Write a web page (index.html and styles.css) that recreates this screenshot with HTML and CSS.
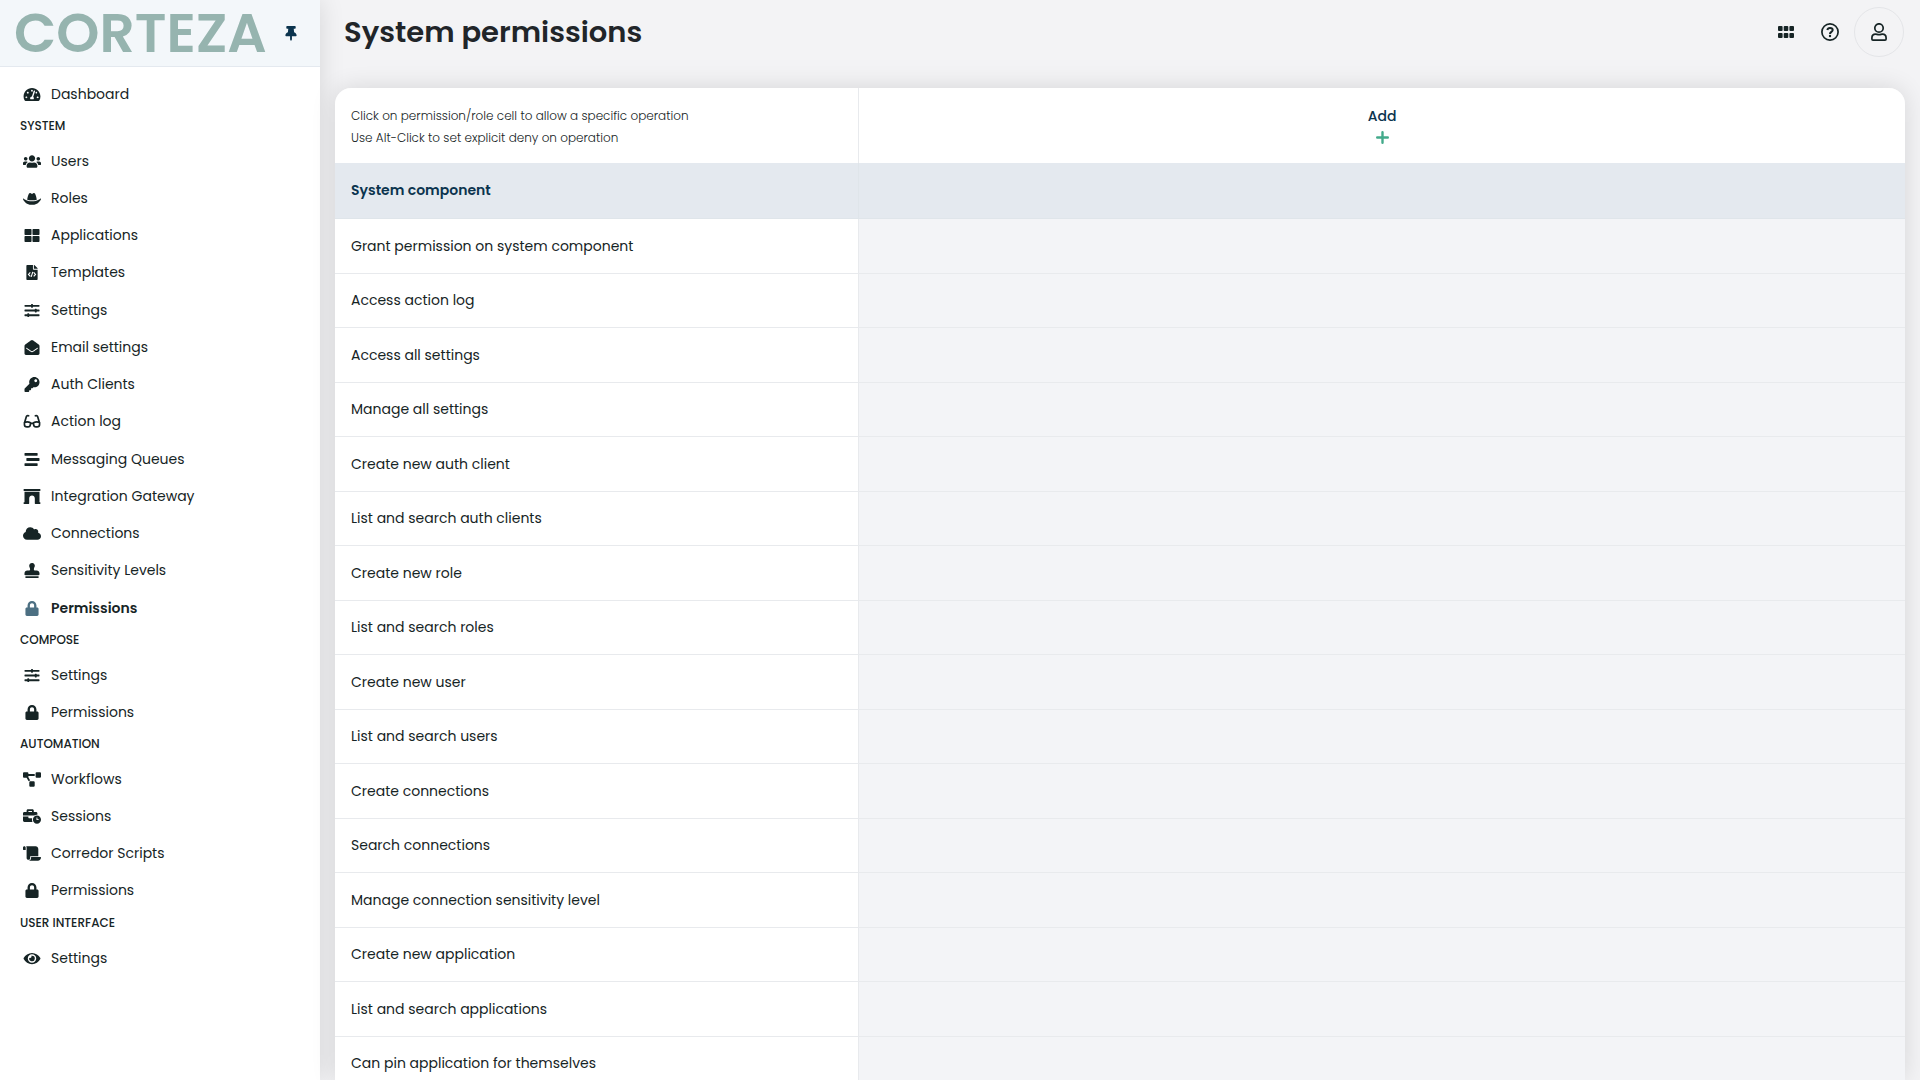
FILE: index.html
```html
<!DOCTYPE html>
<html lang="en">
<head>
<meta charset="utf-8">
<title>System permissions</title>
<meta name="viewport" content="width=device-width, initial-scale=1">
<link rel="stylesheet" href="styles.css">
</head>
<body>
<svg class="sprite" aria-hidden="true">
  <symbol id="gauge" viewBox="0 0 576 512"><path d="M288 32C128.94 32 0 160.94 0 320c0 52.8 14.25 102.26 39.06 144.8 5.61 9.62 16.3 15.2 27.44 15.2h443c11.14 0 21.83-5.58 27.44-15.2C561.75 422.26 576 372.8 576 320c0-159.06-128.94-288-288-288zm0 64c14.71 0 26.58 10.13 30.32 23.65-1.11 2.26-2.64 4.23-3.45 6.67l-9.22 27.67c-5.13 3.49-10.97 6.01-17.64 6.01-17.67 0-32-14.33-32-32S270.33 96 288 96zM96 384c-17.67 0-32-14.33-32-32s14.33-32 32-32 32 14.33 32 32-14.33 32-32 32zm48-160c-17.67 0-32-14.33-32-32s14.33-32 32-32 32 14.33 32 32-14.33 32-32 32zm246.77-72.41l-61.33 184C343.13 347.33 352 364.54 352 384c0 11.72-3.38 22.55-8.88 32H232.88c-5.5-9.45-8.88-20.28-8.88-32 0-33.94 26.5-61.43 59.9-63.59l61.34-184.01c4.17-12.56 17.73-19.45 30.36-15.17 12.57 4.19 19.35 17.79 15.17 30.36zm14.66 57.2l15.52-46.55c3.47-1.29 7.13-2.23 11.05-2.23 17.67 0 32 14.33 32 32s-14.33 32-32 32c-11.38-.01-20.89-6.28-26.57-15.22zM480 384c-17.67 0-32-14.33-32-32s14.33-32 32-32 32 14.33 32 32-14.33 32-32 32z"/></symbol>
  <symbol id="users" viewBox="0 0 640 512"><path d="M96 224c35.3 0 64-28.7 64-64s-28.7-64-64-64-64 28.7-64 64 28.7 64 64 64zm448 0c35.3 0 64-28.7 64-64s-28.7-64-64-64-64 28.7-64 64 28.7 64 64 64zm32 32h-64c-17.6 0-33.5 7.1-45.1 18.6 40.3 22.1 68.9 62 75.1 109.4h66c17.7 0 32-14.3 32-32v-32c0-35.3-28.7-64-64-64zm-256 0c61.9 0 112-50.1 112-112S381.9 32 320 32 208 82.1 208 144s50.1 112 112 112zm76.8 32h-8.3c-20.8 10-43.9 16-68.5 16s-47.6-6-68.5-16h-8.3C179.6 288 128 339.6 128 403.2V432c0 26.5 21.5 48 48 48h288c26.5 0 48-21.5 48-48v-28.8c0-63.6-51.6-115.2-115.2-115.2zm-223.7-13.4C161.5 263.1 145.6 256 128 256H64c-35.3 0-64 28.7-64 64v32c0 17.7 14.3 32 32 32h65.9c6.3-47.4 34.9-87.3 75.2-109.4z"/></symbol>
  <symbol id="hat" viewBox="0 0 640 512"><path d="M490 296.9C480.51 239.51 450.51 64 392.3 64c-14 0-26.49 5.93-37 14a58.21 58.21 0 0 1-70.58 0c-10.51-8-23-14-37-14-58.2 0-88.2 175.47-97.71 232.88C188.81 309.47 243.73 320 320 320s131.23-10.51 170-23.1zm142.9-37.18a16 16 0 0 0-19.75 1.5c-1 .9-101.27 90.78-293.16 90.78-190.82 0-292.22-89.94-293.24-90.84A16 16 0 0 0 1 278.53C1.73 280.55 78.32 480 320 480s318.27-199.45 319-201.47a16 16 0 0 0-6.09-18.81z"/></symbol>
  <symbol id="tiles" viewBox="0 0 512 512"><path d="M296 32h192c13.255 0 24 10.745 24 24v160c0 13.255-10.745 24-24 24H296c-13.255 0-24-10.745-24-24V56c0-13.255 10.745-24 24-24zm-80 0H24C10.745 32 0 42.745 0 56v160c0 13.255 10.745 24 24 24h192c13.255 0 24-10.745 24-24V56c0-13.255-10.745-24-24-24zM0 296v160c0 13.255 10.745 24 24 24h192c13.255 0 24-10.745 24-24V296c0-13.255-10.745-24-24-24H24c-13.255 0-24 10.745-24 24zm296 184h192c13.255 0 24-10.745 24-24V296c0-13.255-10.745-24-24-24H296c-13.255 0-24 10.745-24 24v160c0 13.255 10.745 24 24 24z"/></symbol>
  <symbol id="filecode" viewBox="0 0 384 512"><path d="M384 121.941V128H256V0h6.059c6.365 0 12.47 2.529 16.971 7.029l97.941 97.941A24.005 24.005 0 0 1 384 121.941zM248 160c-13.2 0-24-10.8-24-24V0H24C10.745 0 0 10.745 0 24v464c0 13.255 10.745 24 24 24h336c13.255 0 24-10.745 24-24V160H248z"/><path fill="none" stroke="#fff" stroke-width="38" d="M134 254l-62 66 62 66M250 254l62 66-62 66M220 232l-56 176"/></symbol>
  <symbol id="sliders" viewBox="0 0 512 512"><path d="M496 384H160v-16c0-8.800-7.200-16-16-16h-32c-8.800 0-16 7.200-16 16v16H16c-8.800 0-16 7.200-16 16v32c0 8.800 7.200 16 16 16h80v16c0 8.800 7.200 16 16 16h32c8.800 0 16-7.200 16-16v-16h336c8.800 0 16-7.200 16-16v-32c0-8.800-7.200-16-16-16zm0-160h-80v-16c0-8.800-7.200-16-16-16h-32c-8.800 0-16 7.200-16 16v16H16c-8.800 0-16 7.200-16 16v32c0 8.800 7.200 16 16 16h336v16c0 8.800 7.200 16 16 16h32c8.800 0 16-7.200 16-16v-16h80c8.800 0 16-7.200 16-16v-32c0-8.800-7.200-16-16-16zm0-160H288V48c0-8.800-7.200-16-16-16h-32c-8.800 0-16 7.200-16 16v16H16C7.200 64 0 71.200 0 80v32c0 8.800 7.200 16 16 16h208v16c0 8.800 7.200 16 16 16h32c8.800 0 16-7.200 16-16v-16h208c8.800 0 16-7.200 16-16V80c0-8.800-7.200-16-16-16z"/></symbol>
  <symbol id="mail" viewBox="0 0 512 512"><path d="M512 464c0 26.51-21.49 48-48 48H48c-26.51 0-48-21.49-48-48V200.724a48 48 0 0 1 18.387-37.776c24.913-19.529 45.501-35.365 164.2-121.511C199.412 29.17 232.797-.347 256 .003c23.198-.354 56.596 29.172 73.413 41.433 118.687 86.137 139.303 101.995 164.2 121.512A48 48 0 0 1 512 200.724V464zm-65.666-196.605c-2.563-3.728-7.7-4.595-11.339-1.907-22.845 16.873-55.462 40.705-105.582 77.079-16.825 12.266-50.21 41.781-73.413 41.43-23.211.344-56.559-29.143-73.413-41.43-50.114-36.37-82.734-60.204-105.582-77.079-3.639-2.688-8.776-1.821-11.339 1.907l-9.072 13.196a7.998 7.998 0 0 0 1.839 10.967c22.887 16.899 55.454 40.69 105.303 76.868 20.274 14.781 56.524 47.813 92.264 47.573 35.724.242 71.961-32.771 92.263-47.573 49.85-36.179 82.418-59.97 105.303-76.868a7.998 7.998 0 0 0 1.839-10.967l-9.071-13.196z"/></symbol>
  <symbol id="key" viewBox="0 0 512 512"><path d="M512 176.001C512 273.203 433.202 352 336 352c-11.22 0-22.19-1.062-32.827-3.069l-24.012 27.014A23.999 23.999 0 0 1 261.223 384H224v40c0 13.255-10.745 24-24 24h-40v40c0 13.255-10.745 24-24 24H24c-13.255 0-24-10.745-24-24v-78.059c0-6.365 2.529-12.47 7.029-16.971l161.802-161.802C163.108 213.814 160 195.271 160 176 160 78.798 238.797.001 335.999 0 433.488-.001 512 78.511 512 176.001zM336 128c0 26.51 21.49 48 48 48s48-21.49 48-48-21.49-48-48-48-48 21.49-48 48z"/></symbol>
  <symbol id="glasses" viewBox="0 0 576 512"><path fill="none" stroke="currentColor" stroke-width="58" stroke-linecap="round" stroke-linejoin="round" d="M174 62c-42-16-68-8-80 34L30 310M402 62c42-16 68-8 80 34l64 214M30 290c62-28 136-28 208 8l-6 66c-4 48-32 78-78 78h-38c-52 0-86-36-86-84zM546 290c-62-28-136-28-208 8l6 66c4 48 32 78 78 78h38c52 0 86-36 86-84zM238 318h100"/></symbol>
  <symbol id="stream" viewBox="0 0 512 512"><path d="M16 128h416c8.840 0 16-7.160 16-16V48c0-8.840-7.160-16-16-16H16C7.160 32 0 39.160 0 48v64c0 8.840 7.160 16 16 16zm480 80H80c-8.840 0-16 7.160-16 16v64c0 8.840 7.160 16 16 16h416c8.840 0 16-7.160 16-16v-64c0-8.840-7.160-16-16-16zm-64 176H16c-8.840 0-16 7.160-16 16v64c0 8.840 7.160 16 16 16h416c8.840 0 16-7.160 16-16v-64c0-8.840-7.160-16-16-16z"/></symbol>
  <symbol id="archway" viewBox="0 0 576 512"><path d="M560 448h-16V96H32v352H16.020c-8.840 0-16 7.160-16 16v32c0 8.840 7.160 16 16 16H176c8.840 0 16-7.160 16-16V320c0-53.020 42.980-96 96-96s96 42.980 96 96l.02 160v16c0 8.840 7.160 16 16 16H560c8.840 0 16-7.160 16-16v-32c0-8.840-7.160-16-16-16zm0-448H16C7.160 0 0 7.160 0 16v32c0 8.840 7.160 16 16 16h544c8.840 0 16-7.160 16-16V16c0-8.840-7.160-16-16-16z"/></symbol>
  <symbol id="cloud" viewBox="0 0 640 512"><path d="M537.6 226.6c4.1-10.7 6.4-22.4 6.4-34.6 0-53-43-96-96-96-19.7 0-38.1 6-53.3 16.2C367 64.2 315.3 32 256 32c-88.4 0-160 71.6-160 160 0 2.7.1 5.4.2 8.1C40.2 219.8 0 273.2 0 336c0 79.5 64.5 144 144 144h368c70.7 0 128-57.3 128-128 0-61.9-44-113.6-102.4-125.4z"/></symbol>
  <symbol id="stamp" viewBox="0 0 512 512"><path d="M32 512h448v-64H32v64zm384-256h-66.560c-16.260 0-29.440-13.180-29.440-29.440v-9.460c0-27.370 8.880-53.410 21.460-77.720 9.110-17.610 12.900-38.390 9.050-60.420-6.770-38.780-38.470-70.700-77.260-77.450C212.620-9.040 160 37.330 160 96c0 14.160 3.120 27.540 8.690 39.580C182.020 164.430 192 194.700 192 226.490v.07c0 16.260-13.180 29.440-29.440 29.440H96c-53.020 0-96 42.980-96 96v32c0 17.670 14.330 32 32 32h448c17.670 0 32-14.330 32-32v-32c0-53.020-42.980-96-96-96z"/></symbol>
  <symbol id="lock" viewBox="0 0 448 512"><path d="M400 224h-24v-72C376 68.200 307.800 0 224 0S72 68.200 72 152v72H48c-26.500 0-48 21.500-48 48v192c0 26.500 21.500 48 48 48h352c26.500 0 48-21.500 48-48V272c0-26.500-21.500-48-48-48zm-104 0H152v-72c0-39.700 32.300-72 72-72s72 32.300 72 72v72z"/></symbol>
  <symbol id="diagram" viewBox="0 0 640 512"><path d="M384 320H256c-17.670 0-32 14.330-32 32v128c0 17.670 14.330 32 32 32h128c17.670 0 32-14.330 32-32V352c0-17.670-14.330-32-32-32zM192 32c0-17.670-14.330-32-32-32H32C14.330 0 0 14.330 0 32v128c0 17.670 14.330 32 32 32h95.720l73.160 128.040C211.980 300.980 232.400 288 256 288h.28L192 175.510V128h224V64H192V32zM608 0H480c-17.670 0-32 14.330-32 32v128c0 17.670 14.330 32 32 32h128c17.670 0 32-14.330 32-32V32c0-17.670-14.330-32-32-32z"/></symbol>
  <symbol id="worktime" viewBox="0 0 640 512"><path d="M496 224c-79.590 0-144 64.410-144 144s64.410 144 144 144 144-64.410 144-144-64.410-144-144-144zm64 150.290c0 5.340-4.370 9.710-9.710 9.710h-60.570c-5.340 0-9.710-4.370-9.710-9.710v-76.570c0-5.340 4.370-9.710 9.710-9.710h12.570c5.340 0 9.710 4.370 9.710 9.710V352h38.290c5.340 0 9.710 4.370 9.710 9.710v12.580zM496 192c5.400 0 10.720.33 16 .81V144c0-25.600-22.400-48-48-48h-80V48c0-25.600-22.400-48-48-48H176c-25.600 0-48 22.400-48 48v48H48c-25.600 0-48 22.400-48 48v80h395.120c28.600-20.090 63.350-32 100.880-32zM320 96H192V64h128v32zm6.820 224H208c-8.840 0-16-7.160-16-16v-48H0v144c0 25.600 22.400 48 48 48h291.430C327.100 423.960 320 396.820 320 368c0-16.660 2.480-32.720 6.820-48z"/></symbol>
  <symbol id="scroll" viewBox="0 0 640 512"><path d="M48 0C21.530 0 0 21.530 0 48v64c0 8.840 7.160 16 16 16h80V48C96 21.530 74.470 0 48 0zm208 412.570V352h288V96c0-52.940-43.060-96-96-96H111.590C121.740 13.410 128 29.920 128 48v368c0 38.870 34.650 69.650 74.750 63.120C234.220 474 256 444.460 256 412.570zM288 384v32c0 52.930-43.060 96-96 96h336c61.860 0 112-50.140 112-112 0-8.840-7.160-16-16-16H288z"/></symbol>
  <symbol id="eye" viewBox="0 0 576 512"><path d="M572.52 241.4C518.29 135.59 410.93 64 288 64S57.68 135.64 3.48 241.41a32.35 32.35 0 0 0 0 29.19C57.71 376.41 165.07 448 288 448s230.32-71.64 284.52-177.41a32.35 32.35 0 0 0 0-29.19zM288 400a144 144 0 1 1 144-144 143.93 143.93 0 0 1-144 144zm0-240a95.31 95.31 0 0 0-25.31 3.79 47.85 47.85 0 0 1-66.9 66.9A95.78 95.78 0 1 0 288 160z"/></symbol>
  <symbol id="pin" viewBox="0 0 384 512"><path d="M298.028 214.267L285.793 96H328c13.255 0 24-10.745 24-24V24c0-13.255-10.745-24-24-24H56C42.745 0 32 10.745 32 24v48c0 13.255 10.745 24 24 24h42.207L85.972 214.267C37.465 236.82 0 277.261 0 328c0 13.255 10.745 24 24 24h136v104.007c0 1.242.289 2.467.845 3.578l24 48c2.941 5.882 11.364 5.893 14.311 0l24-48a8.008 8.008 0 0 0 .845-3.578V352h136c13.255 0 24-10.745 24-24-.001-51.183-37.983-91.42-85.973-113.733z"/></symbol>
</svg>

<div class="app">
  <aside class="sidebar">
    <header class="brand">
      <a class="logo" href="#">CORTEZA</a>
      <button class="pin" type="button" aria-label="Unpin sidebar"><svg><use href="#pin"/></svg></button>
    </header>
    <nav class="nav">
      <ul>
        <li><a href="#"><svg><use href="#gauge"/></svg>Dashboard</a></li>
      </ul>
      <h2>SYSTEM</h2>
      <ul>
        <li><a href="#"><svg><use href="#users"/></svg>Users</a></li>
        <li><a href="#"><svg><use href="#hat"/></svg>Roles</a></li>
        <li><a href="#"><svg><use href="#tiles"/></svg>Applications</a></li>
        <li><a href="#"><svg><use href="#filecode"/></svg>Templates</a></li>
        <li><a href="#"><svg><use href="#sliders"/></svg>Settings</a></li>
        <li><a href="#"><svg><use href="#mail"/></svg>Email settings</a></li>
        <li><a href="#"><svg><use href="#key"/></svg>Auth Clients</a></li>
        <li><a href="#"><svg><use href="#glasses"/></svg>Action log</a></li>
        <li><a href="#"><svg><use href="#stream"/></svg>Messaging Queues</a></li>
        <li><a href="#"><svg><use href="#archway"/></svg>Integration Gateway</a></li>
        <li><a href="#"><svg><use href="#cloud"/></svg>Connections</a></li>
        <li><a href="#"><svg><use href="#stamp"/></svg>Sensitivity Levels</a></li>
        <li><a class="active" href="#" aria-current="page"><svg><use href="#lock"/></svg>Permissions</a></li>
      </ul>
      <h2>COMPOSE</h2>
      <ul>
        <li><a href="#"><svg><use href="#sliders"/></svg>Settings</a></li>
        <li><a href="#"><svg><use href="#lock"/></svg>Permissions</a></li>
      </ul>
      <h2>AUTOMATION</h2>
      <ul>
        <li><a href="#"><svg><use href="#diagram"/></svg>Workflows</a></li>
        <li><a href="#"><svg><use href="#worktime"/></svg>Sessions</a></li>
        <li><a href="#"><svg><use href="#scroll"/></svg>Corredor Scripts</a></li>
        <li><a href="#"><svg><use href="#lock"/></svg>Permissions</a></li>
      </ul>
      <h2>USER INTERFACE</h2>
      <ul>
        <li><a href="#"><svg><use href="#eye"/></svg>Settings</a></li>
      </ul>
    </nav>
  </aside>

  <main class="main">
    <header class="topbar">
      <h1>System permissions</h1>
      <div class="tools">
        <button class="tool" type="button" aria-label="Applications">
          <svg width="16" height="12" viewBox="0 0 16 12"><rect width="4.600" height="5" rx="1"/><rect x="5.700" width="4.600" height="5" rx="1"/><rect x="11.400" width="4.600" height="5" rx="1"/><rect y="7" width="4.600" height="5" rx="1"/><rect x="5.700" y="7" width="4.600" height="5" rx="1"/><rect x="11.400" y="7" width="4.600" height="5" rx="1"/></svg>
        </button>
        <button class="tool" type="button" aria-label="Help">
          <svg class="outline" width="18" height="18" viewBox="0 0 18 18" stroke-width="1.700"><circle cx="9" cy="9" r="8.100"/><path stroke-width="2" d="M6.300 7C6.600 5.500 7.700 4.900 9 4.900c1.500 0 2.700.9 2.700 2.200C11.700 8.900 9 8.900 9 10.900"/><circle cx="9" cy="13" r="1.200" fill="currentColor" stroke="none"/></svg>
        </button>
        <button class="tool avatar" type="button" aria-label="Account">
          <svg class="outline" width="16" height="18" viewBox="0 0 16 18" stroke-width="1.700"><circle cx="8" cy="5" r="4.200"/><path stroke-linejoin="round" d="M4.600 11.200c1.200 0 1.700.5 3.400.5s2.200-.5 3.400-.5c2.200 0 3.700 1.600 3.700 3.800v1c0 .7-.4 1.100-1.100 1.100H2c-.7 0-1.100-.4-1.100-1.100v-1c0-2.200 1.500-3.800 3.700-3.800z"/></svg>
        </button>
      </div>
    </header>

    <section class="card">
      <table class="permissions">
        <thead>
          <tr>
            <th class="hint" scope="col">Click on permission/role cell to allow a specific operation<br>Use Alt-Click to set explicit deny on operation</th>
            <th class="add" scope="col">
              <button type="button">Add
                <svg class="outline" width="13" height="13" viewBox="0 0 13 13" stroke-width="2.400" stroke-linecap="round"><path d="M6.500 1.200v10.600M1.200 6.500h10.600"/></svg>
              </button>
            </th>
          </tr>
        </thead>
        <tbody>
          <tr class="group"><th scope="row">System component</th><td></td></tr>
          <tr><th scope="row">Grant permission on system component</th><td></td></tr>
          <tr><th scope="row">Access action log</th><td></td></tr>
          <tr><th scope="row">Access all settings</th><td></td></tr>
          <tr><th scope="row">Manage all settings</th><td></td></tr>
          <tr><th scope="row">Create new auth client</th><td></td></tr>
          <tr><th scope="row">List and search auth clients</th><td></td></tr>
          <tr><th scope="row">Create new role</th><td></td></tr>
          <tr><th scope="row">List and search roles</th><td></td></tr>
          <tr><th scope="row">Create new user</th><td></td></tr>
          <tr><th scope="row">List and search users</th><td></td></tr>
          <tr><th scope="row">Create connections</th><td></td></tr>
          <tr><th scope="row">Search connections</th><td></td></tr>
          <tr><th scope="row">Manage connection sensitivity level</th><td></td></tr>
          <tr><th scope="row">Create new application</th><td></td></tr>
          <tr><th scope="row">List and search applications</th><td></td></tr>
          <tr><th scope="row">Can pin application for themselves</th><td></td></tr>
        </tbody>
      </table>
    </section>
  </main>
</div>
</body>
</html>
```
FILE: styles.css
```css
* {
  box-sizing: border-box;
}

body {
  margin: 0;
  background: #f3f3f5;
  color: #162425;
  font-family: Poppins, Inter, "Open Sans", sans-serif;
  font-size: 14px;
}

button {
  padding: 0;
  border: 0;
  background: none;
  color: inherit;
  font: inherit;
  cursor: pointer;
}

a {
  color: inherit;
  text-decoration: none;
}

svg {
  fill: currentColor;
}

.outline {
  fill: none;
  stroke: currentColor;
}

.sprite {
  display: none;
}

.app {
  display: flex;
  height: 100vh;
  overflow: hidden;
}

/* Sidebar */

.sidebar {
  display: flex;
  flex: 0 0 320px;
  flex-direction: column;
  background: #fff;
  box-shadow: 0 0 24px rgba(0, 0, 0, 0.12);
}

.brand {
  display: flex;
  flex: none;
  align-items: center;
  justify-content: space-between;
  height: 67px;
  padding: 0 23px 0 14px;
  border-bottom: 1px solid #e4e9ef;
  background: #f3f7fa;
}

.logo {
  color: #96b4af;
  font-size: 55px;
  font-weight: 600;
  line-height: 66px;
}

.pin {
  display: flex;
  color: #0b344e;
}

.pin svg {
  width: 12px;
  height: 15px;
}

.nav {
  flex: 1;
  padding-top: 9px;
  overflow: auto;
}

.nav ul {
  margin: 0;
  padding: 0;
  list-style: none;
}

.nav a {
  display: flex;
  align-items: center;
  gap: 10px;
  height: 37px;
  padding: 0 23px;
}

.nav li:nth-child(4n) {
  padding-bottom: 1px;
}

.nav svg {
  width: 18px;
  height: 15px;
}

.nav .active {
  font-weight: 600;
}

.nav .active svg {
  color: #4c6f82;
}

.nav h2 {
  height: 30px;
  margin: 0;
  padding: 0 20px;
  font-size: 12px;
  font-weight: 500;
  line-height: 25px;
}

/* Main area */

.main {
  display: flex;
  flex: 1;
  flex-direction: column;
  min-width: 0;
  padding: 0 15px;
}

.topbar {
  display: flex;
  flex: none;
  align-items: center;
  justify-content: space-between;
  height: 64px;
  padding: 0 1px 0 9px;
}

.topbar h1 {
  margin: 0;
  color: #212529;
  font-size: 29px;
  font-weight: 600;
}

.tools {
  display: flex;
  align-items: center;
}

.tool {
  display: flex;
  align-items: center;
  justify-content: center;
  width: 44px;
  height: 44px;
}

.avatar {
  width: 50px;
  height: 50px;
  margin-left: 2px;
  border: 1px solid #e4e5e8;
  border-radius: 50%;
}

.card {
  flex: 1;
  min-height: 0;
  margin-top: 24px;
  overflow: auto;
  border-radius: 16px 16px 0 0;
  background: #fff;
  box-shadow: 0 0 24px rgba(0, 0, 0, 0.12);
  scrollbar-width: none;
}

.permissions {
  width: 100%;
  border-collapse: separate;
  border-spacing: 0;
  table-layout: fixed;
}

.permissions th,
.permissions td {
  padding: 0 16px;
  border-bottom: 1px solid #e8eaed;
  font-weight: 400;
  text-align: left;
}

.permissions th:first-child {
  width: 33.4%;
  border-right: 1px solid #e8eaed;
}

.permissions thead th {
  height: 75px;
  border-bottom: 0;
}

.permissions thead .hint {
  padding-top: 2px;
  font-size: 12px;
  font-weight: 300;
  line-height: 22px;
}

.permissions thead .add {
  padding-bottom: 2px;
  text-align: center;
}

.add button {
  display: inline-flex;
  flex-direction: column;
  align-items: center;
  gap: 4px;
  color: #0b344e;
  font-weight: 500;
  line-height: 22px;
}

.add svg {
  color: #43aa8b;
}

.permissions tbody tr {
  height: 54px;
}

.permissions tbody tr:nth-child(even) {
  height: 55px;
}

.permissions tbody td {
  background: #f3f4f7;
}

.permissions tbody .group {
  height: 56px;
}

.permissions .group th,
.permissions .group td {
  border-color: #dfe5ea;
  background: #e4e9ef;
  color: #0b344e;
  font-weight: 600;
}
```
